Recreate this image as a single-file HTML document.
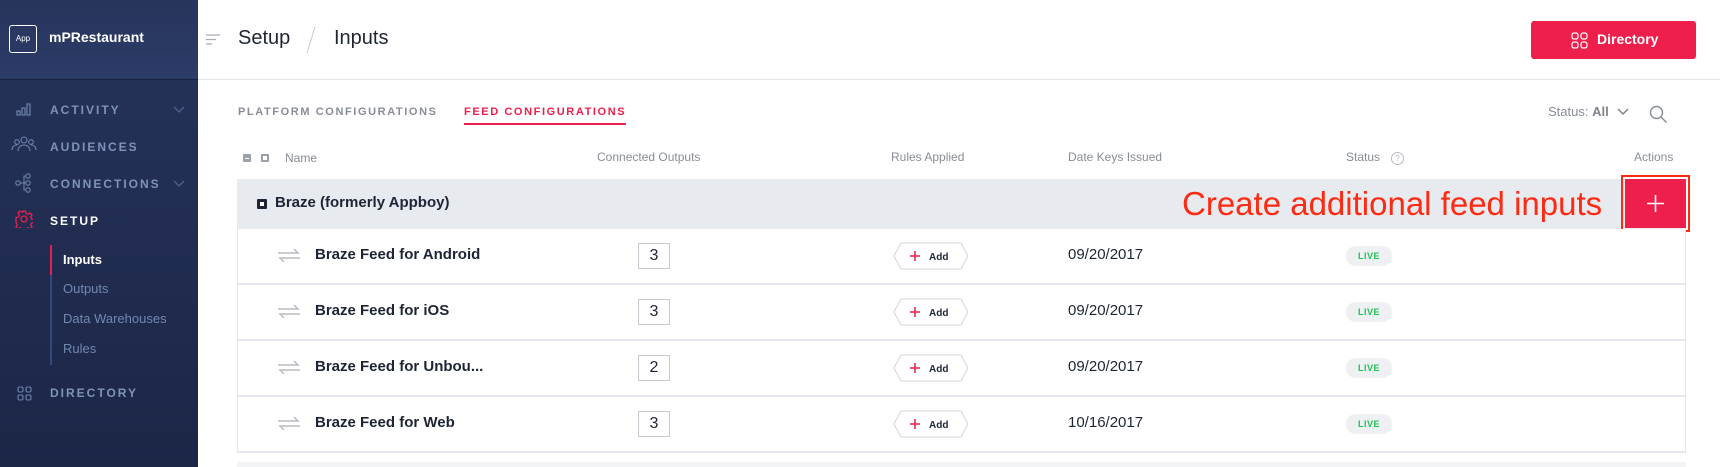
<!DOCTYPE html>
<html><head><meta charset="utf-8"><style>
*{margin:0;padding:0;box-sizing:border-box}
body{width:1720px;height:467px;overflow:hidden;background:#fff;font-family:"Liberation Sans",Arial,sans-serif;position:relative}
.sb{position:absolute;left:0;top:0;width:198px;height:467px;background:linear-gradient(#26335a,#1c2647)}
.sbh{position:absolute;left:0;top:0;width:198px;height:80px;background:linear-gradient(#27345c,#2c3c68);border-bottom:1px solid #172040}
.a{position:absolute;color:#fff}
.nav{position:absolute;left:50px;font-size:12px;font-weight:bold;letter-spacing:2px;color:#7f93b8}
.sub{position:absolute;left:63px;font-size:13px;color:#7288b0}
.g{position:absolute;color:#888d96}
.row{position:absolute;left:237px;width:1449px;height:56px;border:1px solid #e4e7ec;border-top:none;border-bottom:2px solid #e4e7ec;background:#fff}
.rn{position:absolute;left:77px;top:17px;font-size:15px;font-weight:bold;color:#1d2435}
.box{position:absolute;left:400px;top:14px;width:32px;height:26px;border:1px solid #c8ccd2;font-size:16px;text-align:center;line-height:24px;color:#1d2435}
.dt{position:absolute;left:830px;top:17px;font-size:15px;color:#1d2435}
.live{position:absolute;left:1108px;top:17px;width:46px;height:20px;border-radius:10px;background:#eef0f1;color:#1fbf5a;font-size:9px;font-weight:bold;text-align:center;line-height:20px;letter-spacing:.5px}
.arr{position:absolute;left:40px;top:19px}
.hex{position:absolute;left:655px;top:13px}
</style></head><body>
<div class="sb"></div><div class="sbh"></div>
<div class="a" style="left:9px;top:25px;width:28px;height:28px;border:1px solid #fff;border-radius:3px;font-size:8px;text-align:center;line-height:26px">App</div>
<div class="a" style="left:49px;top:29px;font-size:14px;font-weight:bold">mPRestaurant</div>
<svg style="position:absolute;left:16px;top:102px" width="18" height="14"><g fill="none" stroke="#6d82a8" stroke-width="1.2"><rect x="1" y="9" width="3" height="4"/><rect x="6" y="6" width="3" height="7"/><rect x="11" y="2" width="3" height="11"/></g></svg>
<div class="nav" style="top:103px">ACTIVITY</div>
<svg style="position:absolute;left:173px;top:106px" width="12" height="8"><path d="M1 1l5 5 5-5" stroke="#4e6290" fill="none" stroke-width="1.3"/></svg>
<svg style="position:absolute;left:11px;top:136px" width="26" height="16"><g fill="none" stroke="#6d82a8" stroke-width="1.1"><circle cx="13" cy="4" r="3"/><circle cx="6" cy="6" r="2.3"/><circle cx="20" cy="6" r="2.3"/><path d="M7 15c0-4 3-6 6-6s6 2 6 6M1 14c0-3 2-5 5-5M25 14c0-3-2-5-5-5"/></g></svg>
<div class="nav" style="top:140px">AUDIENCES</div>
<svg style="position:absolute;left:15px;top:172px" width="18" height="22"><g fill="none" stroke="#6d82a8" stroke-width="1.1"><circle cx="3" cy="11" r="2.2"/><circle cx="13" cy="4" r="2.2"/><circle cx="13" cy="11" r="2.2"/><circle cx="13" cy="18" r="2.2"/><path d="M5 11h6M9 11V4h2M9 11v7h2"/></g></svg>
<div class="nav" style="top:177px">CONNECTIONS</div>
<svg style="position:absolute;left:173px;top:180px" width="12" height="8"><path d="M1 1l5 5 5-5" stroke="#4e6290" fill="none" stroke-width="1.3"/></svg>
<svg style="position:absolute;left:15px;top:210px" width="18" height="18"><g fill="none" stroke="#e8204f" stroke-width="1.3"><circle cx="9" cy="9" r="3"/><path d="M7.5 1h3l.5 2.3 2 1 2-1.3 2 2-1.3 2 1 2 2.3.5v3l-2.3.5-1 2 1.3 2-2 2-2-1.3-2 1-.5 2.3h-3l-.5-2.3-2-1-2 1.3-2-2 1.3-2-1-2L1 10.5v-3l2.3-.5 1-2-1.3-2 2-2 2 1.3 2-1z"/></g></svg>
<div class="nav" style="top:214px;color:#fff">SETUP</div>
<div style="position:absolute;left:50px;top:245px;width:2px;height:120px;background:#2f4a7e"></div>
<div style="position:absolute;left:50px;top:245px;width:2px;height:30px;background:#e8204f"></div>
<div class="sub" style="top:252px;color:#fff;font-weight:bold">Inputs</div>
<div class="sub" style="top:281px">Outputs</div>
<div class="sub" style="top:311px">Data Warehouses</div>
<div class="sub" style="top:341px">Rules</div>
<svg style="position:absolute;left:17px;top:386px" width="15" height="15"><g fill="none" stroke="#6d82a8" stroke-width="1.1"><rect x="1" y="1" width="5" height="5" rx="1.5"/><rect x="9" y="1" width="5" height="5" rx="1.5"/><rect x="1" y="9" width="5" height="5" rx="1.5"/><rect x="9" y="9" width="5" height="5" rx="1.5"/></g></svg>
<div class="nav" style="top:386px">DIRECTORY</div>

<div style="position:absolute;left:198px;top:79px;width:1522px;height:1px;background:#e2e4e8"></div>
<svg style="position:absolute;left:206px;top:34px" width="16" height="12"><path d="M0 1h14M0 5.5h10M0 10h6" stroke="#a8adb5" stroke-width="1.3"/></svg>
<div style="position:absolute;left:238px;top:27px;font-size:20px;color:#1d2435">Setup</div>
<svg style="position:absolute;left:305px;top:26px" width="12" height="28"><path d="M10 1L2 27" stroke="#c5c9d0" stroke-width="1"/></svg>
<div style="position:absolute;left:334px;top:27px;font-size:20px;color:#1d2435">Inputs</div>
<div style="position:absolute;left:1531px;top:21px;width:165px;height:38px;background:#ef1f4b;border-radius:3px"></div>
<svg style="position:absolute;left:1571px;top:32px" width="17" height="17"><g fill="none" stroke="#fff" stroke-width="1.2"><rect x="1" y="1" width="6" height="6" rx="2"/><rect x="10" y="1" width="6" height="6" rx="2"/><rect x="1" y="10" width="6" height="6" rx="2"/><rect x="10" y="10" width="6" height="6" rx="2"/></g></svg>
<div class="a" style="left:1597px;top:31px;font-size:14px;font-weight:bold">Directory</div>

<div class="g" style="left:238px;top:106px;font-size:11px;font-weight:bold;letter-spacing:1.6px">PLATFORM CONFIGURATIONS</div>
<div style="position:absolute;left:464px;top:106px;font-size:11px;font-weight:bold;letter-spacing:1.6px;color:#ef1f4b">FEED CONFIGURATIONS</div>
<div style="position:absolute;left:464px;top:123px;width:162px;height:2px;background:#ef1f4b"></div>
<div class="g" style="left:1548px;top:104px;font-size:13px">Status: <b style="color:#7e838c">All</b></div>
<svg style="position:absolute;left:1617px;top:108px" width="12" height="8"><path d="M1 1l5 5 5-5" stroke="#7e838c" fill="none" stroke-width="1.5"/></svg>
<svg style="position:absolute;left:1649px;top:105px" width="19" height="19"><g fill="none" stroke="#888d96" stroke-width="1.4"><circle cx="7.5" cy="7.5" r="6"/><path d="M12 12l5.5 5.5"/></g></svg>

<div style="position:absolute;left:243px;top:154px;width:8px;height:8px;background:#9aa0a8;border-radius:1px"><div style="position:absolute;left:2px;top:3.5px;width:4px;height:1px;background:#fff"></div></div>
<div style="position:absolute;left:261px;top:154px;width:8px;height:8px;background:#9aa0a8;border-radius:1px"><div style="position:absolute;left:2px;top:2px;width:4px;height:4px;background:#fff"></div></div>
<div class="g" style="left:285px;top:151px;font-size:12px">Name</div>
<div class="g" style="left:597px;top:150px;font-size:12px">Connected Outputs</div>
<div class="g" style="left:891px;top:150px;font-size:12px">Rules Applied</div>
<div class="g" style="left:1068px;top:150px;font-size:12px">Date Keys Issued</div>
<div class="g" style="left:1346px;top:150px;font-size:12px">Status</div>
<div style="position:absolute;left:1391px;top:152px;width:13px;height:13px;border:1px solid #b8bcc3;border-radius:50%;font-size:8px;color:#b0b4bb;text-align:center;line-height:11px">?</div>
<div class="g" style="left:1634px;top:150px;font-size:12px">Actions</div>

<div style="position:absolute;left:237px;top:179px;width:1449px;height:50px;background:#e7eaef"></div>
<div style="position:absolute;left:257px;top:199px;width:10px;height:10px;background:#1d2435;border-radius:1px"><div style="position:absolute;left:3px;top:3px;width:4px;height:4px;background:#fff"></div></div>
<div style="position:absolute;left:275px;top:194px;font-size:15px;font-weight:bold;color:#1d2435">Braze (formerly Appboy)</div>
<div style="position:absolute;left:1182px;top:185px;font-size:33px;color:#ff2a12;font-family:'Liberation Sans',Arial,sans-serif">Create additional feed inputs</div>
<div style="position:absolute;left:1621px;top:175px;width:69px;height:57px;border:2px solid #ff2a12"></div>
<div style="position:absolute;left:1625px;top:179px;width:61px;height:49px;background:#ef1f4b"></div>
<svg style="position:absolute;left:1646px;top:194px" width="19" height="19"><path d="M9.5 1v17M1 9.5h17" stroke="#fff" stroke-width="1.6"/></svg>

<div class="row" style="top:229px"><svg class="arr" width="22" height="14"><path d="M0 5h20l-4-4M22 10H2l4 4" stroke="#b8bcc2" fill="none" stroke-width="1.5"/></svg><div class="rn">Braze Feed for Android</div><div class="box">3</div><svg class="hex" width="76" height="28"><path d="M8 1h60l7 13-7 13H8L1 14z" fill="#fff" stroke="#d2d5da"/><path d="M17 14h10M22 9v10" stroke="#ef1f4b" stroke-width="1.5"/><text x="36" y="18" font-size="10" font-weight="bold" fill="#1d2435" font-family="Liberation Sans,Arial,sans-serif">Add</text></svg><div class="dt">09/20/2017</div><div class="live">LIVE</div></div>
<div class="row" style="top:285px"><svg class="arr" width="22" height="14"><path d="M0 5h20l-4-4M22 10H2l4 4" stroke="#b8bcc2" fill="none" stroke-width="1.5"/></svg><div class="rn">Braze Feed for iOS</div><div class="box">3</div><svg class="hex" width="76" height="28"><path d="M8 1h60l7 13-7 13H8L1 14z" fill="#fff" stroke="#d2d5da"/><path d="M17 14h10M22 9v10" stroke="#ef1f4b" stroke-width="1.5"/><text x="36" y="18" font-size="10" font-weight="bold" fill="#1d2435" font-family="Liberation Sans,Arial,sans-serif">Add</text></svg><div class="dt">09/20/2017</div><div class="live">LIVE</div></div>
<div class="row" style="top:341px"><svg class="arr" width="22" height="14"><path d="M0 5h20l-4-4M22 10H2l4 4" stroke="#b8bcc2" fill="none" stroke-width="1.5"/></svg><div class="rn">Braze Feed for Unbou...</div><div class="box">2</div><svg class="hex" width="76" height="28"><path d="M8 1h60l7 13-7 13H8L1 14z" fill="#fff" stroke="#d2d5da"/><path d="M17 14h10M22 9v10" stroke="#ef1f4b" stroke-width="1.5"/><text x="36" y="18" font-size="10" font-weight="bold" fill="#1d2435" font-family="Liberation Sans,Arial,sans-serif">Add</text></svg><div class="dt">09/20/2017</div><div class="live">LIVE</div></div>
<div class="row" style="top:397px"><svg class="arr" width="22" height="14"><path d="M0 5h20l-4-4M22 10H2l4 4" stroke="#b8bcc2" fill="none" stroke-width="1.5"/></svg><div class="rn">Braze Feed for Web</div><div class="box">3</div><svg class="hex" width="76" height="28"><path d="M8 1h60l7 13-7 13H8L1 14z" fill="#fff" stroke="#d2d5da"/><path d="M17 14h10M22 9v10" stroke="#ef1f4b" stroke-width="1.5"/><text x="36" y="18" font-size="10" font-weight="bold" fill="#1d2435" font-family="Liberation Sans,Arial,sans-serif">Add</text></svg><div class="dt">10/16/2017</div><div class="live">LIVE</div></div>
<div style="position:absolute;left:237px;top:462px;width:1449px;height:5px;background:#f3f4f6"></div>
</body></html>
